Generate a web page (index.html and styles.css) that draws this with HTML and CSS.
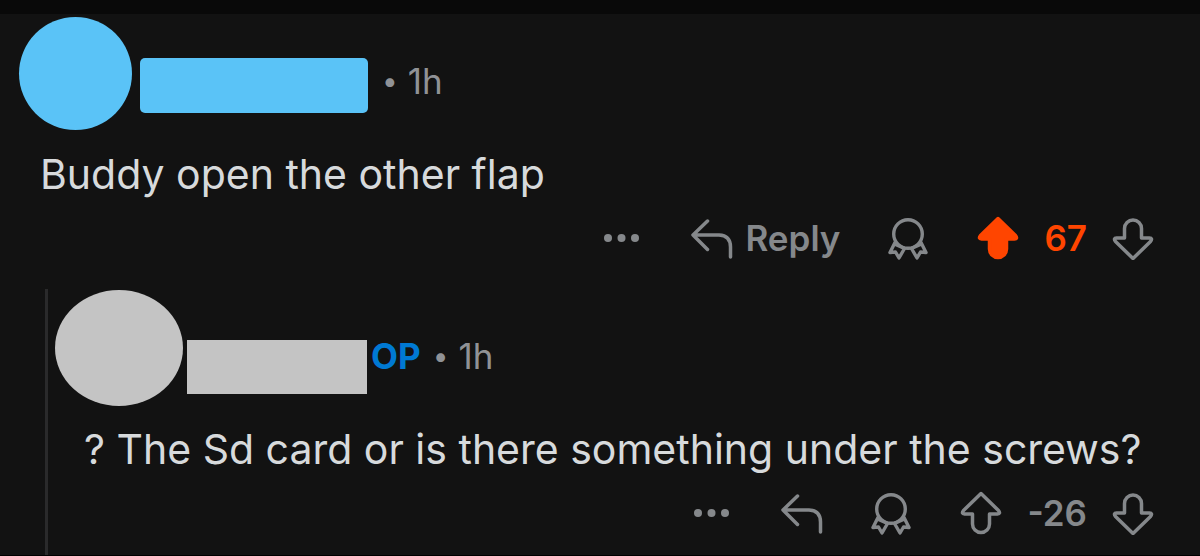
FILE: index.html
```html
<!DOCTYPE html>
<html lang="en">

<head>
  <meta charset="UTF-8">
  <title>Comments</title>
  <meta name="viewport" content="width=device-width, initial-scale=1.0">
  <link rel="stylesheet" href="styles.css">
</head>

<body>
  <!-- shared icons -->
  <svg class="sprite" aria-hidden="true">
    <symbol id="icon-more" viewBox="0 0 44 44">
      <g fill="currentColor" stroke="none">
        <circle cx="9" cy="22" r="4" />
        <circle cx="22.500" cy="22" r="4" />
        <circle cx="36" cy="22" r="4" />
      </g>
    </symbol>
    <symbol id="icon-reply" viewBox="0 0 44 44">
      <path stroke-width="3.500" d="M18.500 5 L4 19 L18.500 33.500 M4 19 H30 Q41.500 19.500 41.500 31 V41" />
    </symbol>
    <symbol id="icon-award" viewBox="0 0 44 44">
      <g stroke-width="3.400">
        <circle cx="22" cy="18" r="14.300" />
        <path d="M9 26.500 L4 36.500 L9.500 36 L13 42 L18.500 32.500 M35 26.500 L40 36.500 L34.500 36 L31 42 L25.500 32.500" />
        <path d="M9.500 28.500 L17.500 32 M34.500 28.500 L26.500 32" />
      </g>
    </symbol>
    <symbol id="icon-up" viewBox="0 0 44 44">
      <path stroke-width="3.500" d="M22 2.500 L39.500 19.500 Q42 23 38.500 23 H30.500 V33 A8.500 8.500 0 0 1 13.500 33 V23 H5.500 Q2 23 4.500 19.500 Z" />
    </symbol>
    <symbol id="icon-down" viewBox="0 0 44 44">
      <path stroke-width="3.500" d="M22 42.500 L4.500 25.500 Q2 22 5.500 22 H13.500 V12.500 A8.500 8.500 0 0 1 30.500 12.500 V22 H38.500 Q42 22 39.500 25.500 Z" />
    </symbol>
  </svg>

  <div class="top-bar"></div>

  <main class="thread">
    <article class="comment">
      <header class="comment-header">
        <div class="avatar"></div>
        <div class="user">
          <div class="username"></div>
          <p class="meta"><span class="dot">•</span><time>1h</time></p>
        </div>
      </header>

      <p class="comment-text">Buddy open the other flap</p>

      <div class="actions">
        <button type="button" aria-label="More"><svg class="icon"><use href="#icon-more" /></svg></button>
        <button type="button"><svg class="icon"><use href="#icon-reply" /></svg>Reply</button>
        <button type="button" aria-label="Award"><svg class="icon"><use href="#icon-award" /></svg></button>
        <div class="votes upvoted">
          <button type="button" class="upvote" aria-label="Upvote"><svg class="icon"><use href="#icon-up" /></svg></button>
          <span class="score">67</span>
          <button type="button" aria-label="Downvote"><svg class="icon"><use href="#icon-down" /></svg></button>
        </div>
      </div>
    </article>

    <article class="comment reply">
      <header class="comment-header">
        <div class="avatar"></div>
        <div class="user">
          <div class="username"></div>
          <p class="meta"><span class="op">OP</span><span class="dot">•</span><time>1h</time></p>
        </div>
      </header>

      <p class="comment-text">? The Sd card or is there something under the screws?</p>

      <div class="actions">
        <button type="button" aria-label="More"><svg class="icon"><use href="#icon-more" /></svg></button>
        <button type="button" aria-label="Reply"><svg class="icon"><use href="#icon-reply" /></svg></button>
        <button type="button" aria-label="Award"><svg class="icon"><use href="#icon-award" /></svg></button>
        <div class="votes">
          <button type="button" class="upvote" aria-label="Upvote"><svg class="icon"><use href="#icon-up" /></svg></button>
          <span class="score">-26</span>
          <button type="button" aria-label="Downvote"><svg class="icon"><use href="#icon-down" /></svg></button>
        </div>
      </div>
    </article>
  </main>
</body>

</html>
```

FILE: styles.css
```css
* {
  box-sizing: border-box;
}

body {
  margin: 0;
  min-height: 100vh;
  display: flex;
  flex-direction: column;
  font-family: Inter, 'Liberation Sans', sans-serif;
  background: #121212;
  color: #d7dadc;
}

p {
  margin: 0;
}

.sprite {
  display: none;
}

.top-bar {
  height: 14px;
  background: #090909;
}

.thread {
  flex: 1;
  display: flex;
  flex-direction: column;
  padding-top: 3px;
  border-bottom: 1px solid #000;
}

.comment-header {
  display: flex;
  gap: 8px;
  padding-left: 19px;
}

.avatar {
  width: 113px;
  height: 113px;
  border-radius: 50%;
  background: #5ac3f7;
}

.user {
  display: flex;
  margin-top: 41px;
}

.username {
  width: 228px;
  height: 55px;
  border-radius: 5px;
  background: #5ac3f7;
}

.meta {
  display: flex;
  padding-left: 14px;
  font-size: 35px;
  line-height: 46px;
  color: #909296;
}

.dot {
  margin-right: 10px;
  font-size: 28px;
}

.comment-text {
  margin: 19px 0 17px;
  padding: 0 40px;
  font-size: 41px;
  line-height: 50px;
}

.actions {
  display: flex;
  justify-content: flex-end;
  gap: 46px;
  padding-right: 45px;
  color: #85888b;
  font-size: 35px;
  font-weight: 600;
}

.actions button {
  display: flex;
  align-items: center;
  gap: 12px;
  padding: 0;
  border: none;
  background: none;
  color: inherit;
  font: inherit;
  line-height: 44px;
  cursor: pointer;
}

.icon {
  display: block;
  width: 44px;
  height: 44px;
  fill: none;
  stroke: currentColor;
  stroke-linecap: round;
  stroke-linejoin: round;
}

.votes {
  display: flex;
  gap: 24px;
  line-height: 44px;
}

.upvoted .upvote,
.upvoted .score {
  color: #ff4500;
}

.upvoted .upvote .icon {
  fill: currentColor;
}

/* nested reply */
.reply {
  flex: 1;
  margin: 29px 0 0 45px;
  padding-top: 1px;
  border-left: 3px solid #2a2a2b;
}

.reply .comment-header {
  gap: 4px;
  padding-left: 7px;
}

.reply .avatar {
  width: 128px;
  height: 116px;
  background: #c4c4c4;
}

.reply .user {
  margin-top: 50px;
}

.reply .username {
  width: 180px;
  height: 54px;
  border-radius: 0;
  background: #c4c4c4;
}

.reply .meta {
  padding-left: 4px;
  line-height: 32px;
}

.op {
  margin-right: 12px;
  font-weight: 700;
  color: #0079d3;
}

.reply .comment-text {
  margin: 18px 0 17px;
  padding-left: 36px;
}
```
